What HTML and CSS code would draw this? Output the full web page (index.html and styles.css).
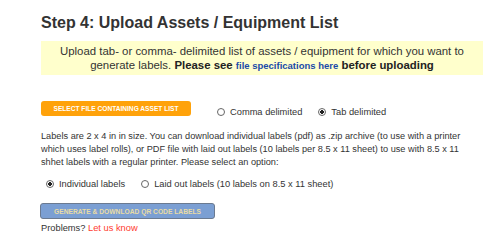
FILE: index.html
```html
<!DOCTYPE html>
<html lang="en">
<head>
    <meta charset="UTF-8">
    <meta name="viewport" content="width=device-width, initial-scale=1.0">
    <title>Upload Assets</title>
    <link rel="stylesheet" href="styles.css">
</head>
<body>
    <div class="container">
        <h2>Step 4: Upload Assets / Equipment List</h2>
        <div class="notice">
            Upload tab- or comma- delimited list of assets / equipment for which you want to
            generate labels. <b>Please see <a href="#" class="spec-link">file specifications here</a> before uploading</b>
        </div>
        <div class="upload-row">
            <button class="btn-select">Select file containing asset list</button>
            <label class="radio"><input type="radio" name="delim"> Comma delimited</label>
            <label class="radio"><input type="radio" name="delim" checked> Tab delimited</label>
        </div>
        <p class="info">
            Labels are 2 x 4 in in size. You can download individual labels (pdf) as .zip archive (to use with a printer
            which uses label rolls), or PDF file with laid out labels (10 labels per 8.5 x 11 sheet) to use with 8.5 x 11
            shhet labels with a regular printer. Please select an option:
        </p>
        <div class="option-row">
            <label class="radio"><input type="radio" name="layout" checked> Individual labels</label>
            <label class="radio"><input type="radio" name="layout"> Laid out labels (10 labels on 8.5 x 11 sheet)</label>
        </div>
        <button class="btn-generate">Generate &amp; download QR code labels</button>
        <div class="problems">Problems? <a href="#">Let us know</a></div>
    </div>
</body>
</html>
```

FILE: styles.css
```css
body {
    background: #fff;
    font-family: "Liberation Sans", Arial, sans-serif;
    color: #333;
    margin: 0;
    padding: 0;
}

.container {
    width: 442px;
    margin-left: 41px;
    padding-top: 14px;
}

h2 {
    font-size: 16px;
    line-height: 18px;
    font-weight: bold;
    margin: 0 0 9px 0;
    color: #333;
}

.notice {
    background: #ffffcc;
    text-align: center;
    font-size: 11.4px;
    line-height: 14px;
    padding: 3px 8px;
    height: 28px;
}

.notice b {
    color: #222;
}

.spec-link {
    color: #1a4aa8;
    font-size: 9.5px;
    line-height: 12px;
    text-decoration: none;
}

.upload-row {
    display: flex;
    align-items: flex-start;
    margin-top: 26px;
    font-size: 9.3px;
}

.btn-select {
    width: 150px;
    height: 15px;
    background: #ffa20a;
    color: #fff;
    border: none;
    border-radius: 3px;
    font-family: inherit;
    font-size: 6.6px;
    font-weight: bold;
    text-transform: uppercase;
    padding: 0;
    margin-right: 26px;
}

.radio {
    display: flex;
    align-items: center;
    margin-right: 16px;
    line-height: 12px;
}

.upload-row .radio {
    margin-top: 5px;
}

.radio input {
    appearance: none;
    width: 8px;
    height: 8px;
    border: 1px solid #666;
    border-radius: 50%;
    background: #fff;
    margin: 0 5px 0 0;
}

.radio input:checked {
    background: radial-gradient(circle, #222 0, #222 40%, #fff 50%);
}

.info {
    font-size: 9.2px;
    line-height: 13px;
    margin: 12px 0 0 0;
}

.option-row {
    display: flex;
    font-size: 9.3px;
    margin: 9px 0 0 5px;
}

.btn-generate {
    display: block;
    width: 175px;
    height: 16px;
    margin: 13px 0 0 -1px;
    background: #7b9fd3;
    color: #e9dca4;
    border: 1px solid #6b7a90;
    border-radius: 3px;
    font-family: inherit;
    font-size: 6.7px;
    font-weight: bold;
    text-transform: uppercase;
    padding: 0;
}

.problems {
    font-size: 9.3px;
    line-height: 12px;
    margin-top: 3px;
}

.problems a {
    color: #ff3b2f;
    text-decoration: none;
}
```
